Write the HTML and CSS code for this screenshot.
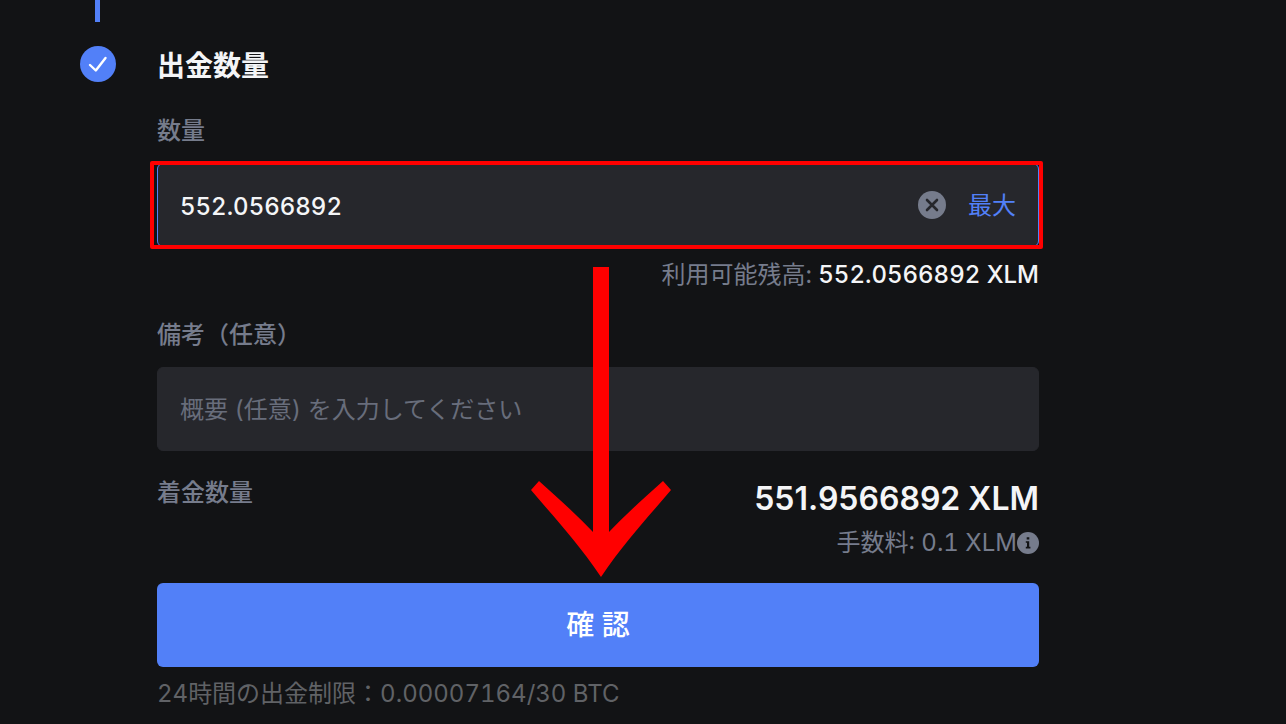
FILE: index.html
```html
<!DOCTYPE html>
<html lang="ja">
<head>
    <meta charset="UTF-8">
    <meta name="viewport" content="width=device-width, initial-scale=1.0">
    <title>出金数量</title>
    <link rel="stylesheet" href="styles.css">
</head>
<body>
    <main class="step">
        <div class="step-rail">
            <div class="step-line"></div>
            <svg class="step-icon" viewBox="0 0 36 36" aria-hidden="true">
                <circle cx="18" cy="18" r="18" fill="#5280f8"/>
                <path d="M10 19L15.8 24.5L25.5 12" fill="none" stroke="#fff" stroke-width="2.4" stroke-linecap="round" stroke-linejoin="round"/>
            </svg>
        </div>

        <form class="step-content">
            <h1>出金数量</h1>

            <label class="label" for="amount">数量</label>
            <div class="field field-active">
                <input type="text" id="amount" value="552.0566892">
                <button type="button" class="clear-button" aria-label="クリア">
                    <svg viewBox="0 0 28 28">
                        <circle cx="14" cy="14" r="14" fill="#767c8c"/>
                        <path d="M9 9L19 19M19 9L9 19" stroke="#26272c" stroke-width="2.6" stroke-linecap="round"/>
                    </svg>
                </button>
                <button type="button" class="max-button">最大</button>
                <div class="highlight"></div>
            </div>
            <p class="balance">利用可能残高: <span>552.0566892 XLM</span></p>

            <label class="label" for="note">備考（任意）</label>
            <div class="field">
                <input type="text" id="note" placeholder="概要 (任意) を入力してください">
            </div>

            <div class="summary">
                <p class="summary-label">着金数量</p>
                <div class="summary-values">
                    <p class="total">551.9566892 XLM</p>
                    <p class="fee">手数料: 0.1 XLM
                        <svg viewBox="0 0 22 22" aria-hidden="true">
                            <circle cx="11" cy="11" r="11" fill="#767c8c"/>
                            <path d="M9.7 5.2h2.6v2.4H9.7zM8.8 9.2h3.4v5.6h1.2v1.6H8.8v-1.6h1.2v-4H8.8z" fill="#121315"/>
                        </svg>
                    </p>
                </div>
            </div>

            <button type="submit" class="confirm-button">確 認</button>
            <p class="limit">24時間の出金制限：0.00007164/30 BTC</p>

            <svg class="arrow" viewBox="0 0 140 310" aria-hidden="true">
                <path d="M62 0H78V265C93 249 113 231 132 214L140 223C120 247 95 273 70 310C45 273 20 247 0 223L8 214C27 231 47 249 62 265Z" fill="#f00"/>
            </svg>
        </form>
    </main>
</body>
</html>
```

FILE: styles.css
```css
* {
    box-sizing: border-box;
}

body {
    margin: 0;
    background-color: #121315;
    color: #f4f5f7;
    font-family: Inter, "Noto Sans CJK JP", sans-serif;
    font-size: 24px;
    line-height: 36px;
    font-variant-numeric: tabular-nums;
}

h1,
p {
    margin: 0;
}

button {
    border: none;
    padding: 0;
    background: none;
    font-family: inherit;
    cursor: pointer;
}

.step {
    display: flex;
    gap: 42px;
    max-width: 1039px;
    padding-left: 80px;
}

.step-rail {
    display: flex;
    flex-direction: column;
    align-items: center;
    gap: 24px;
    width: 35px;
}

.step-line {
    width: 5px;
    height: 22px;
    background-color: #5280f8;
}

.step-icon {
    width: 36px;
    height: 36px;
}

.step-content {
    position: relative;
    flex: 1;
    padding-top: 48px;
}

h1 {
    font-size: 28px;
    line-height: 36px;
    font-weight: bold;
}

.label {
    display: block;
    color: #767c8c;
    font-weight: 500;
}

h1 + .label {
    margin-top: 29px;
}

.field {
    position: relative;
    display: flex;
    align-items: center;
    gap: 22px;
    height: 84px;
    margin-top: 14px;
    padding: 0 22px;
    border: 1px solid #26272c;
    border-radius: 6px;
    background-color: #26272c;
}

.field-active {
    border-color: #5280f8;
}

.field input {
    flex: 1;
    min-width: 0;
    padding: 2px 0 0;
    border: none;
    outline: none;
    background: none;
    color: #f4f5f7;
    font: inherit;
}

.field-active input {
    padding-top: 4px;
    font-weight: 500;
}

.field input::placeholder {
    color: #686d7b;
    opacity: 1;
}

.clear-button,
.clear-button svg {
    display: block;
    width: 28px;
    height: 28px;
}

.max-button {
    padding-bottom: 4px;
    color: #5280f8;
    font-size: 24px;
}

/* red frame around the amount field */
.highlight {
    position: absolute;
    inset: -3px -5px -3px -8px;
    border: 4px solid #f00;
    border-radius: 2px;
    pointer-events: none;
}

.balance {
    margin: 10px 0 24px;
    color: #767c8c;
    text-align: right;
}

.balance span {
    color: #f4f5f7;
    font-weight: 500;
}

.summary {
    display: flex;
    justify-content: space-between;
    margin-top: 24px;
    color: #767c8c;
}

.summary-label {
    font-weight: 500;
}

.summary-values {
    text-align: right;
}

.total {
    color: #f4f5f7;
    font-size: 32px;
    line-height: 48px;
    font-weight: 600;
    font-variant-numeric: normal;
}

.fee {
    display: flex;
    align-items: center;
    justify-content: flex-end;
    line-height: 40px;
}

.fee svg {
    width: 22px;
    height: 22px;
}

.confirm-button {
    display: block;
    width: 100%;
    height: 84px;
    margin-top: 20px;
    padding-bottom: 4px;
    border-radius: 6px;
    background-color: #5280f8;
    color: #fff;
    font-size: 28px;
    font-weight: 500;
}

.limit {
    margin-top: 9px;
    color: #606266;
}

.arrow {
    position: absolute;
    top: 267px;
    left: calc(50% - 67px);
    width: 140px;
    height: 310px;
    pointer-events: none;
}
```
